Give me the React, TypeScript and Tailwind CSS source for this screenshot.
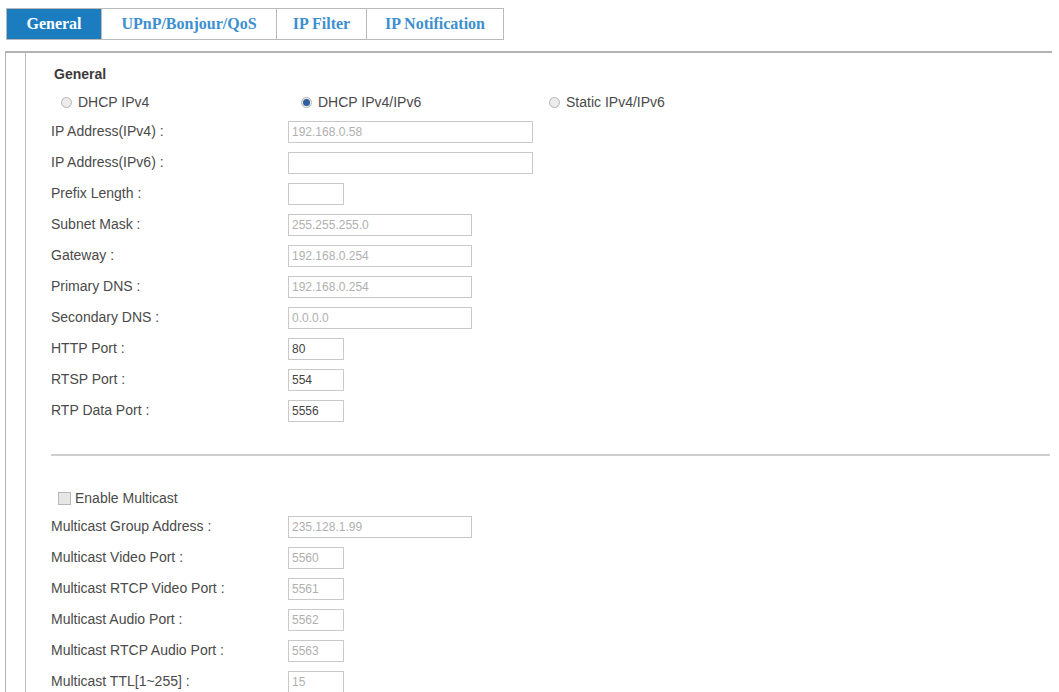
import React from 'react';

type Field = {
    label: string;
    value: string;
    width: string;
    enabled?: boolean;
};

const tabs = ['General', 'UPnP/Bonjour/QoS', 'IP Filter', 'IP Notification'];

const networkFields: Field[] = [
    { label: 'IP Address(IPv4) :', value: '192.168.0.58', width: 'w-[245px]' },
    { label: 'IP Address(IPv6) :', value: '', width: 'w-[245px]', enabled: true },
    { label: 'Prefix Length :', value: '', width: 'w-[56px]', enabled: true },
    { label: 'Subnet Mask :', value: '255.255.255.0', width: 'w-[184px]' },
    { label: 'Gateway :', value: '192.168.0.254', width: 'w-[184px]' },
    { label: 'Primary DNS :', value: '192.168.0.254', width: 'w-[184px]' },
    { label: 'Secondary DNS :', value: '0.0.0.0', width: 'w-[184px]' },
    { label: 'HTTP Port :', value: '80', width: 'w-[56px]', enabled: true },
    { label: 'RTSP Port :', value: '554', width: 'w-[56px]', enabled: true },
    { label: 'RTP Data Port :', value: '5556', width: 'w-[56px]', enabled: true },
];

const multicastFields: Field[] = [
    { label: 'Multicast Group Address :', value: '235.128.1.99', width: 'w-[184px]' },
    { label: 'Multicast Video Port :', value: '5560', width: 'w-[56px]' },
    { label: 'Multicast RTCP Video Port :', value: '5561', width: 'w-[56px]' },
    { label: 'Multicast Audio Port :', value: '5562', width: 'w-[56px]' },
    { label: 'Multicast RTCP Audio Port :', value: '5563', width: 'w-[56px]' },
    { label: 'Multicast TTL[1~255] :', value: '15', width: 'w-[56px]' },
];

const Radio = ({ checked, label }: { checked?: boolean; label: string }) => (
    <label className="flex items-center gap-[6px]">
        <span className="w-[11px] h-[11px] rounded-full border border-[#b5b5b5] bg-[#ececec] flex items-center justify-center">
            {checked && <span className="w-[7px] h-[7px] rounded-full bg-[#2f5f9e]"></span>}
        </span>
        <span>{label}</span>
    </label>
);

const FieldRow = ({ field }: { field: Field }) => (
    <div className="flex items-center h-[31px]">
        <span className="w-[237px] shrink-0">{field.label}</span>
        <div
            className={`${field.width} h-[22px] border border-[#c9c9c9] flex items-center px-[3px] text-[12px] ${
                field.enabled ? 'text-[#444]' : 'text-[#b0b0b0]'
            }`}
        >
            {field.value}
        </div>
    </div>
);

const App = () => {
    return (
        <div className="w-[1059px] h-[692px] overflow-hidden bg-white text-[14px] text-[#4a4a4a] font-['Liberation_Sans',Arial,sans-serif]">
            {/* tab strip */}
            <div className="pt-[8px] pl-[6px] flex">
                <div className="flex border border-[#b9b9b9] h-[32px]">
                    {tabs.map((tab, i) => (
                        <div
                            key={tab}
                            className={`flex items-center justify-center font-bold text-[16px] font-['Liberation_Serif',serif] ${
                                i === 0
                                    ? 'w-[94px] bg-[#1b7cc0] text-white'
                                    : 'text-[#3d8fd0] border-l border-[#b9b9b9]'
                            } ${i === 1 ? 'w-[175px]' : ''} ${i === 2 ? 'w-[90px]' : ''} ${i === 3 ? 'w-[137px]' : ''}`}
                        >
                            {tab}
                        </div>
                    ))}
                </div>
            </div>

            {/* settings frame */}
            <div className="mt-[11px] ml-[5px] mr-[7px] border-t-2 border-l border-[#b3b3b3]">
                <div className="ml-[19px] border-l border-[#bdbdbd] pl-[25px] pt-[12px] min-h-[660px]">
                    <div className="font-bold text-[#3a3a3a] h-[18px] leading-[18px] pl-[3px]">General</div>
                    <div className="flex items-center h-[22px] mt-[8px] pl-[10px]">
                        <div className="w-[240px]">
                            <Radio label="DHCP IPv4" />
                        </div>
                        <div className="w-[248px]">
                            <Radio checked label="DHCP IPv4/IPv6" />
                        </div>
                        <Radio label="Static IPv4/IPv6" />
                    </div>
                    <div className="mt-[3px]">
                        {networkFields.map((f) => (
                            <FieldRow key={f.label} field={f} />
                        ))}
                    </div>

                    <div className="mt-[28px] mr-[2px] h-[2px] bg-[#cfcfcf]"></div>

                    <div className="flex items-center gap-[4px] h-[20px] mt-[32px] pl-[7px]">
                        <span className="w-[13px] h-[13px] border border-[#b8b8b8] bg-[#e6e6e6]"></span>
                        <span>Enable Multicast</span>
                    </div>
                    <div className="mt-[3px]">
                        {multicastFields.map((f) => (
                            <FieldRow key={f.label} field={f} />
                        ))}
                    </div>
                </div>
            </div>
        </div>
    );
};

export default App;
